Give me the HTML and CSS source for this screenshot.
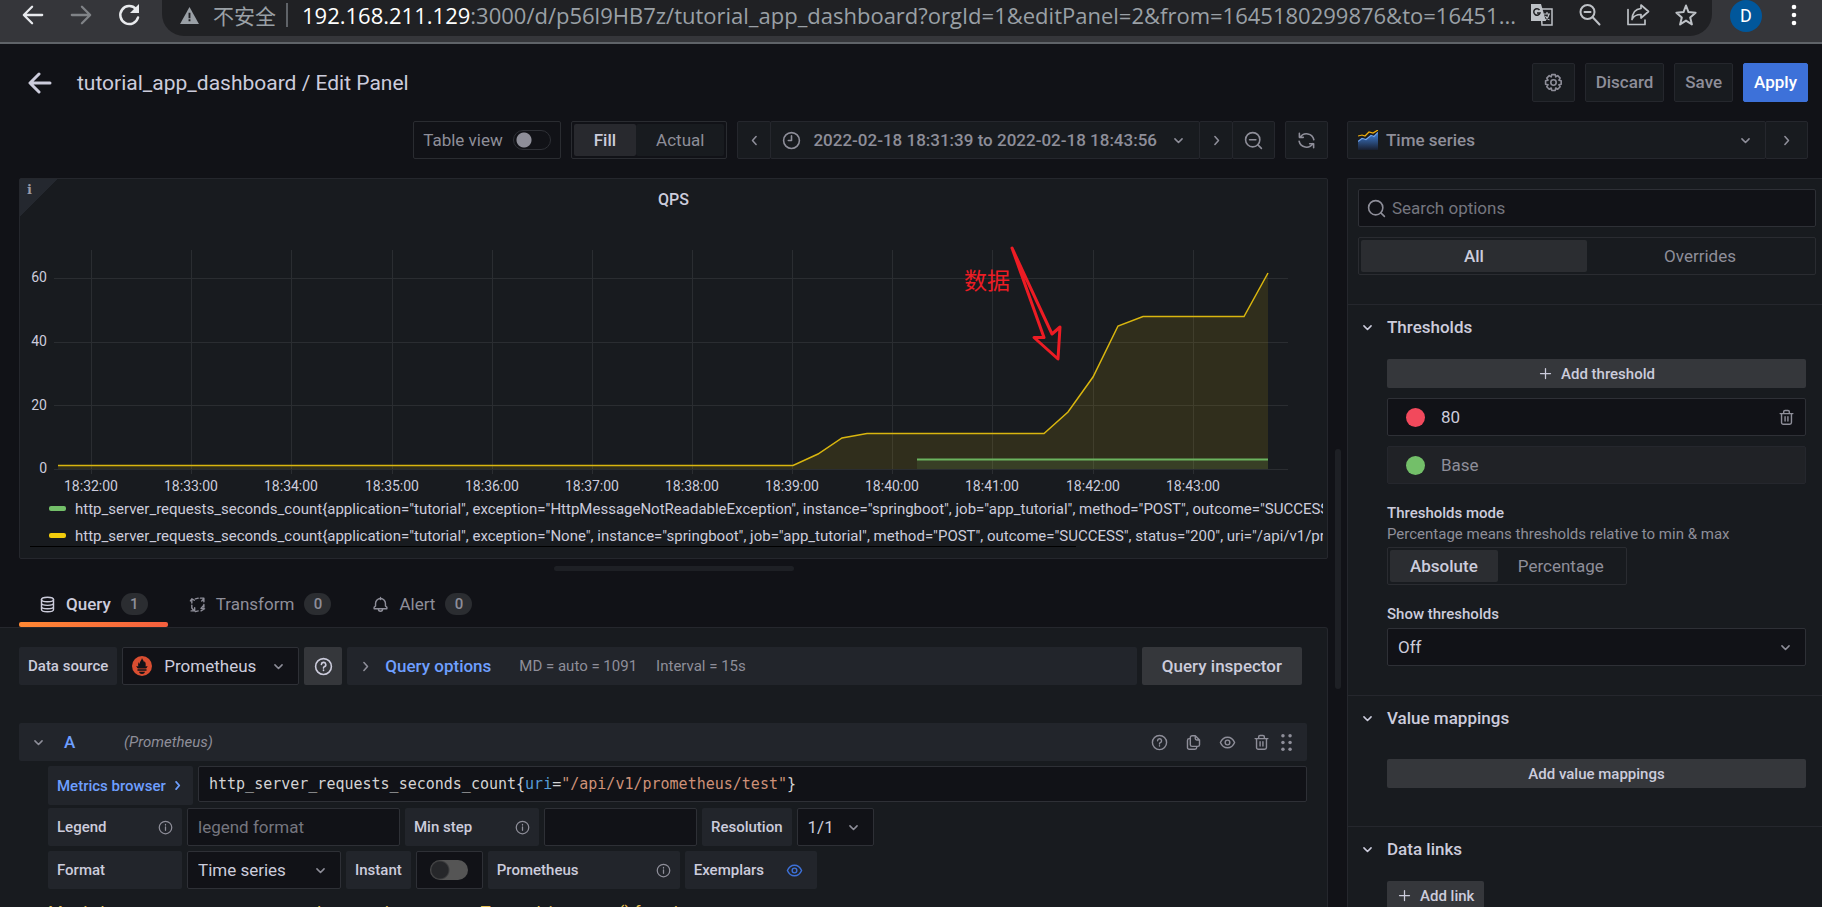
FILE: index.html
```html
<!DOCTYPE html>
<html lang="en">
<head>
<meta charset="utf-8">
<title>tutorial_app_dashboard / Edit Panel</title>
<link rel="stylesheet" href="styles.css">
</head>
<body>
<svg class="sprite" aria-hidden="true">
  <symbol id="down" viewBox="0 0 24 24"><path d="M7.500 10l4.500 4.500 4.500-4.500"/></symbol>
  <symbol id="right" viewBox="0 0 24 24"><path d="M10 7l4.500 5-4.500 5"/></symbol>
  <symbol id="left" viewBox="0 0 24 24"><path d="M14 7l-4.500 5 4.500 5"/></symbol>
  <symbol id="back" viewBox="0 0 24 24"><path d="M22 12H3M11 3l-9 9 9 9"/></symbol>
  <symbol id="plus" viewBox="0 0 24 24"><path d="M12 4v16M4 12h16"/></symbol>
  <symbol id="info" viewBox="0 0 24 24"><circle cx="12" cy="12" r="10"/><path d="M12 11v5.500M12 7v1"/></symbol>
  <symbol id="help" viewBox="0 0 24 24"><circle cx="12" cy="12" r="10"/><path d="M9.300 9.500a2.800 2.800 0 1 1 3.800 2.700c-.8.4-1.100.8-1.100 1.800M12 16.500v.6"/></symbol>
  <symbol id="search" viewBox="0 0 24 24"><circle cx="11" cy="11" r="9"/><path d="M17.500 17.500L22 22"/></symbol>
  <symbol id="zoomout" viewBox="0 0 24 24"><circle cx="11" cy="11" r="9"/><path d="M17.500 17.500L22 22M7 11h8"/></symbol>
  <symbol id="clock" viewBox="0 0 24 24"><circle cx="12" cy="12" r="10"/><path d="M12 6v6H8"/></symbol>
  <symbol id="sync" viewBox="0 0 24 24"><path d="M3 3v5h5M21 21v-5h-5M4 8a9.500 9.500 0 0 1 17.300 3M20 16A9.500 9.500 0 0 1 2.700 13"/></symbol>
  <symbol id="gear" viewBox="0 0 24 24"><circle cx="12" cy="12" r="3.400"/><path d="M9.800 2h4.400l.6 2.900 2.500-1.600 3.100 3.200-1.600 2.500 2.900.7v4.500l-2.900.6 1.600 2.500-3.100 3.200-2.500-1.600-.6 3.100H9.800l-.7-3.100-2.500 1.600-3.100-3.200 1.600-2.500L2 14.200V9.700l3.100-.7-1.600-2.500 3.100-3.200 2.500 1.600z"/></symbol>
  <symbol id="database" viewBox="0 0 24 24"><ellipse cx="12" cy="5" rx="8.500" ry="3.200"/><path d="M3.500 5v14c0 1.900 3.800 3.200 8.500 3.200s8.500-1.300 8.500-3.200V5M3.500 10c0 1.900 3.800 3.200 8.500 3.200s8.500-1.300 8.500-3.200M3.500 14.700c0 1.900 3.800 3.200 8.500 3.200s8.500-1.300 8.500-3.200"/></symbol>
  <symbol id="transform" viewBox="0 0 24 24"><path d="M4 13v4l2 2.500M4 10V6M2 7l2-3 3.500 2M9 4l4-1M16 3h5v5M21 4l-3 3M21 12v4M20 14l-3 3.500 4 .5M22 18l-5 3M9 22l4-1M3 21h5v-4.500"/></symbol>
  <symbol id="bell" viewBox="0 0 24 24"><path d="M12 2v3M3 18h18v-2l-2-2v-3.500a7 7 0 0 0-14 0V14l-2 2zM9 18.500a3 3 0 0 0 6 0"/></symbol>
  <symbol id="copy" viewBox="0 0 24 24"><path d="M20.500 8.500L14.500 2.500H10A2.500 2.500 0 0 0 7.500 5v10a2.500 2.500 0 0 0 2.500 2.500h8a2.500 2.500 0 0 0 2.500-2.500zM14.500 2.500v4a2 2 0 0 0 2 2h4M7.500 6.500H6A2.500 2.500 0 0 0 3.500 9v10A2.500 2.500 0 0 0 6 21.500h8a2.500 2.500 0 0 0 2.500-2.500v-1.500"/></symbol>
  <symbol id="eye" viewBox="0 0 24 24"><path d="M2 12c2-4.800 5.700-7.500 10-7.500s8 2.700 10 7.500c-2 4.800-5.700 7.500-10 7.500S4 16.800 2 12z"/><circle cx="12" cy="12" r="3.300"/></symbol>
  <symbol id="trash" viewBox="0 0 24 24"><path d="M3 6.500h18M8 6V4a2 2 0 0 1 2-2h4a2 2 0 0 1 2 2v2M5 6.500V19a2.500 2.500 0 0 0 2.500 2.500h9A2.500 2.500 0 0 0 19 19V6.500M10 11v6M14 11v6"/></symbol>
  <symbol id="drag" viewBox="0 0 24 24"><g fill="currentColor" stroke="none"><circle cx="7.500" cy="3.500" r="2.200"/><circle cx="16.500" cy="3.500" r="2.200"/><circle cx="7.500" cy="12" r="2.200"/><circle cx="16.500" cy="12" r="2.200"/><circle cx="7.500" cy="20.500" r="2.200"/><circle cx="16.500" cy="20.500" r="2.200"/></g></symbol>
</svg>

<div class="browser">
  <button class="nav" aria-label="Back"><svg class="i i22 bold"><use href="#back"/></svg></button>
  <button class="nav dim" aria-label="Forward"><svg class="i i22 bold flip"><use href="#back"/></svg></button>
  <button class="nav" aria-label="Reload"><svg class="i i24 bold" viewBox="0 0 24 24"><path d="M21 14.500A9 9 0 1 1 19 6"/><path d="M22 1v9h-9z" fill="currentColor" stroke="none"/></svg></button>
  <div class="omnibox">
    <svg class="warn" viewBox="0 0 20 18"><path fill="#9aa0a6" d="M10 0l10 18H0z"/><path fill="#202124" d="M9 6h2v6H9zM9 13h2v2H9z"/></svg>
    <span class="insecure">不安全</span>
    <span class="bar"></span>
    <div class="url"><b>192.168.211.129</b>:3000/d/p56l9HB7z/tutorial_app_dashboard?orgId=1&amp;editPanel=2&amp;from=1645180299876&amp;to=16451...</div>
    <div class="omni-actions">
      <button aria-label="Translate"><svg class="i24" viewBox="0 0 24 24"><path d="M11 6h11v16H12z" fill="none" stroke="#bdc1c6" stroke-width="1.500"/><path d="M1 1h10l5 17H1z" fill="#bdc1c6"/><path d="M9.500 7a3.200 3.200 0 1 0 .5 3H7" fill="none" stroke="#202124" stroke-width="1.500"/><path d="M14 11h6M17 9v2M19 11c-.5 3-2 5-4 6M15.500 13c1 2 2 3.300 4 4" fill="none" stroke="#bdc1c6" stroke-width="1.200"/></svg></button>
      <button aria-label="Zoom"><svg class="i i24" viewBox="0 0 24 24"><circle cx="9.500" cy="9" r="7"/><path d="M14.500 14l7 7.500M6.500 9h6"/></svg></button>
      <button aria-label="Share"><svg class="i i24 thin" viewBox="0 0 24 24"><path d="M2 6.500v15h17V17M15 2l7.500 6.500L15 15v-3.500c-5 0-7.500 1.500-9 5 .3-5.500 3-10.500 9-11z"/></svg></button>
      <button aria-label="Bookmark"><svg class="i i24" viewBox="0 0 24 24"><path d="M12 2.500l2.500 6.600 7.100.6-5.400 4.700 1.700 7-5.900-3.800-5.900 3.800 1.700-7-5.400-4.700 7.100-.6z"/></svg></button>
    </div>
  </div>
  <span class="avatar">D</span>
  <button class="kebab" aria-label="Menu"><svg class="i24" viewBox="0 0 24 24" fill="#fff"><circle cx="12" cy="4" r="2.300"/><circle cx="12" cy="12" r="2.300"/><circle cx="12" cy="20" r="2.300"/></svg></button>
</div>

<header class="top">
  <button class="goback" aria-label="Go back"><svg class="i i24 heavy"><use href="#back"/></svg></button>
  <h1>tutorial_app_dashboard / Edit Panel</h1>
  <div class="top-actions">
    <button class="btn square" aria-label="Settings"><svg class="i i19"><use href="#gear"/></svg></button>
    <button class="btn">Discard</button>
    <button class="btn">Save</button>
    <button class="btn primary">Apply</button>
  </div>
</header>

<main class="editor">
  <div class="left">
    <div class="toolbar">
      <label class="tableview">Table view <input type="checkbox" class="switch"></label>
      <div class="radios">
        <label><input type="radio" name="size" checked><span>Fill</span></label>
        <label><input type="radio" name="size"><span>Actual</span></label>
      </div>
      <div class="group">
        <button class="btn slim" aria-label="Earlier"><svg class="i i19"><use href="#left"/></svg></button>
        <button class="btn range"><svg class="i i19"><use href="#clock"/></svg><span>2022-02-18 18:31:39 to 2022-02-18 18:43:56</span><svg class="i i19"><use href="#down"/></svg></button>
        <button class="btn slim" aria-label="Later"><svg class="i i19"><use href="#right"/></svg></button>
        <button class="btn square" aria-label="Zoom out"><svg class="i i19"><use href="#zoomout"/></svg></button>
      </div>
      <button class="btn square" aria-label="Refresh"><svg class="i i19"><use href="#sync"/></svg></button>
    </div>

    <section class="panel">
      <span class="corner">i</span>
      <h2>QPS</h2>
      <svg class="chart" viewBox="20 218 1307 276">
        <g class="grid">
          <path d="M54 277.500H1288M54 341.500H1288M54 404.500H1288M54 468.500H1288"/>
          <path d="M91.500 249V473M191.500 249V473M291.500 249V473M392.500 249V473M492.500 249V473M592.500 249V473M692.500 249V473M792.500 249V473M892.500 249V473M992.500 249V473M1093.500 249V473M1193.500 249V473"/>
        </g>
        <path fill="#f2cc0c" fill-opacity=".11" d="M58 465H793L818 453L842 437L867 433H1044L1068 411L1093 376L1118 325L1143 315.500H1244L1268 272V468H58z"/>
        <path fill="#73bf69" fill-opacity=".12" d="M917 459H1268V468H917z"/>
        <path class="line yellow" d="M58 464.500H793L818 453L842 437L867 432.500H1044L1068 411L1093 376L1118 325L1143 315.500H1244L1268 272"/>
        <path class="line green" d="M917 458.500H1268"/>
        <g class="ylab"><text x="47" y="281">60</text><text x="47" y="345">40</text><text x="47" y="409">20</text><text x="47" y="472">0</text></g>
        <g class="xlab"><text x="91" y="490">18:32:00</text><text x="191" y="490">18:33:00</text><text x="291" y="490">18:34:00</text><text x="392" y="490">18:35:00</text><text x="492" y="490">18:36:00</text><text x="592" y="490">18:37:00</text><text x="692" y="490">18:38:00</text><text x="792" y="490">18:39:00</text><text x="892" y="490">18:40:00</text><text x="992" y="490">18:41:00</text><text x="1093" y="490">18:42:00</text><text x="1193" y="490">18:43:00</text></g>
        <text class="note" x="964" y="288">数据</text>
        <path class="arrow" d="M1012 247L1044 336.500H1034L1058 358L1060 326L1052 333z"/>
      </svg>
      <ul class="legend">
        <li><i class="sw green"></i><span>http_server_requests_seconds_count{application="tutorial", exception="HttpMessageNotReadableException", instance="springboot", job="app_tutorial", method="POST", outcome="SUCCESS",</span></li>
        <li><i class="sw yellow"></i><span>http_server_requests_seconds_count{application="tutorial", exception="None", instance="springboot", job="app_tutorial", method="POST", outcome="SUCCESS", status="200", uri="/api/v1/pro</span></li>
      </ul>
      <div class="hscroll"></div>
    </section>
    <div class="handle"></div>

    <nav class="tabs">
      <a href="#query" class="active"><svg class="i i17"><use href="#database"/></svg>Query<em>1</em></a>
      <a href="#transform-tab"><svg class="i i17"><use href="#transform"/></svg>Transform<em>0</em></a>
      <a href="#alert"><svg class="i i17"><use href="#bell"/></svg>Alert<em>0</em></a>
    </nav>

    <section class="queries">
      <div class="row source">
        <label class="lab" for="ds">Data source</label>
        <div class="select ds">
          <svg class="prom" viewBox="0 0 20 20"><circle cx="10" cy="10" r="10" fill="#da4e31"/><path fill="#111217" d="M10 2c.5 2 2 2.800 2 4.500.5-.5.6-1 .6-1.500 1.400 2 1.200 3.800 1 5.500l2-.5c-.3 1.200-.9 2-1.500 2.500H6C5 11.800 4.600 11 4.300 10l2 .5C6 8.500 6 7.500 7 6c.1 1 .3 1.500.8 2C7.500 5.500 9.500 4.500 10 2zM5.500 13.300h9v1.500h-9zM7 15.700h6c-.4 1.500-1.400 2.200-3 2.200s-2.600-.7-3-2.200z"/></svg>
          <select id="ds"><option>Prometheus</option></select><svg class="i i19"><use href="#down"/></svg>
        </div>
        <button class="btn solid help" aria-label="Help"><svg class="i i19"><use href="#help"/></svg></button>
        <div class="options"><svg class="i i19"><use href="#right"/></svg><a href="#options">Query options</a><span>MD = auto = 1091</span><span>Interval = 15s</span></div>
        <button class="btn solid inspector">Query inspector</button>
      </div>

      <div class="qhead">
        <svg class="i i19"><use href="#down"/></svg><strong>A</strong><i>(Prometheus)</i>
        <div class="qicons">
          <button aria-label="Show help"><svg class="i i17"><use href="#help"/></svg></button>
          <button aria-label="Duplicate"><svg class="i i17"><use href="#copy"/></svg></button>
          <button aria-label="Toggle"><svg class="i i17"><use href="#eye"/></svg></button>
          <button aria-label="Remove"><svg class="i i17"><use href="#trash"/></svg></button>
          <button class="grip" aria-label="Drag"><svg class="i i19"><use href="#drag"/></svg></button>
        </div>
      </div>

      <div class="row indent expr">
        <button class="lab metrics">Metrics browser <svg class="i i17 bold"><use href="#right"/></svg></button>
        <code class="code">http_server_requests_seconds_count{<span class="k">uri</span>=<span class="s">"/api/v1/prometheus/test"</span>}</code>
      </div>
      <div class="row indent">
        <label class="lab w134" for="lf">Legend <svg class="i i15"><use href="#info"/></svg></label>
        <input class="field w213" id="lf" type="text" placeholder="legend format">
        <label class="lab w134" for="ms">Min step <svg class="i i15"><use href="#info"/></svg></label>
        <input class="field w153" id="ms" type="text">
        <label class="lab" for="rs">Resolution</label>
        <div class="select w77"><select id="rs"><option>1/1</option></select><svg class="i i19"><use href="#down"/></svg></div>
      </div>
      <div class="row indent">
        <label class="lab w134" for="ft">Format</label>
        <div class="select w154"><select id="ft"><option>Time series</option></select><svg class="i i19"><use href="#down"/></svg></div>
        <label class="lab" for="inst">Instant</label>
        <div class="switchbox"><input id="inst" type="checkbox" class="switch gray"></div>
        <span class="lab w192">Prometheus <svg class="i i15"><use href="#info"/></svg></span>
        <div class="lab exemplars">Exemplars <button aria-label="Toggle exemplars"><svg class="i i17 blue"><use href="#eye"/></svg></button></div>
      </div>
      <p class="hint">Metric http_server_requests_seconds_count is a counter. Try applying a rate() function.</p>
    </section>
  </div>

  <div class="vscroll"></div>

  <aside class="right">
    <div class="viz">
      <button class="btn vizname">
        <svg class="i20" viewBox="0 0 20 20"><defs><linearGradient id="b" x2="0" y2="1"><stop stop-color="#3f7fd6"/><stop offset="1" stop-color="#181f30"/></linearGradient></defs><path fill="url(#b)" d="M0 12l4-3 4 1 5-4 3 1 4-4v17H0z"/><path fill="none" stroke="#6ea6f5" stroke-width="1.200" d="M0 11.500l4-3 4 1 5-4 3 1 4-4"/><path fill="none" stroke="#f2b00c" stroke-width="1.200" d="M0 6l4-1 3 1 4-4 4 1 5-3"/></svg>
        <span>Time series</span><svg class="i i19"><use href="#down"/></svg></button>
      <button class="btn square" aria-label="Close options"><svg class="i i19"><use href="#right"/></svg></button>
    </div>
    <div class="pane">
      <div class="filters">
        <label class="search"><svg class="i i19"><use href="#search"/></svg><input type="text" placeholder="Search options" aria-label="Search options"></label>
        <div class="radios wide">
          <label><input type="radio" name="tab" checked><span>All</span></label>
          <label><input type="radio" name="tab"><span>Overrides</span></label>
        </div>
      </div>
      <section class="opt first">
        <h3><svg class="i i19"><use href="#down"/></svg>Thresholds</h3>
        <div class="body">
          <button class="btn solid small"><svg class="i i15"><use href="#plus"/></svg>Add threshold</button>
          <div class="thr"><span class="dot red"></span><input type="text" value="80" aria-label="Threshold"><button aria-label="Remove threshold"><svg class="i i17"><use href="#trash"/></svg></button></div>
          <div class="thr base"><span class="dot green"></span><input type="text" value="Base" aria-label="Base threshold" disabled></div>
          <div class="fieldset mode">
            <h4>Thresholds mode</h4>
            <p>Percentage means thresholds relative to min &amp; max</p>
            <div class="radios fit">
              <label><input type="radio" name="mode" checked><span>Absolute</span></label>
              <label><input type="radio" name="mode"><span>Percentage</span></label>
            </div>
          </div>
          <div class="fieldset">
            <h4><label for="st">Show thresholds</label></h4>
            <div class="select"><select id="st"><option>Off</option></select><svg class="i i19"><use href="#down"/></svg></div>
          </div>
        </div>
      </section>
      <section class="opt">
        <h3><svg class="i i19"><use href="#down"/></svg>Value mappings</h3>
        <div class="body"><button class="btn solid small">Add value mappings</button></div>
      </section>
      <section class="opt">
        <h3><svg class="i i19"><use href="#down"/></svg>Data links</h3>
        <div class="body tight"><button class="btn solid small auto"><svg class="i i15"><use href="#plus"/></svg>Add link</button></div>
      </section>
    </div>
  </aside>
</main>
</body>
</html>
```
FILE: styles.css
```css
* { box-sizing: border-box; }
html, body { height: 100%; }
body {
  margin: 0;
  display: flex;
  flex-direction: column;
  overflow: hidden;
  background: #111217;
  color: #ccccdc;
  font: 17px/20px Roboto, "Noto Sans CJK SC", sans-serif;
}
button, input, select { font: inherit; color: inherit; }
button { padding: 0; border: 0; background: none; display: inline-flex; align-items: center; justify-content: center; }
a { color: inherit; text-decoration: none; }
h1, h2, h3, h4, p, ul { margin: 0; padding: 0; font-weight: 400; }
svg { flex: none; display: block; }
.sprite { display: none; }

.i { fill: none; stroke: currentColor; stroke-width: 2; stroke-linecap: round; stroke-linejoin: round; }
.i15 { width: 15px; height: 15px; }
.i17 { width: 17px; height: 17px; }
.i19 { width: 19px; height: 19px; }
.i20 { width: 20px; height: 20px; }
.i22 { width: 22px; height: 22px; }
.i24 { width: 24px; height: 24px; }
.thin { stroke-width: 1.700; }
.bold { stroke-width: 2.500; }
.heavy { stroke-width: 3; }
.flip { transform: scaleX(-1); }
.blue { color: #3d71d9; }

/* browser chrome */
.browser {
  flex: none;
  height: 44px;
  display: flex;
  align-items: flex-start;
  gap: 24px;
  padding: 0 16px 0 21px;
  background: #35363a;
  border-bottom: 2px solid #5f6368;
}
.browser button { height: 30px; color: #e8eaed; }
.nav { width: 24px; }
.browser .dim { color: #808387; }
.omnibox {
  flex: 1;
  min-width: 0;
  height: 36px;
  padding: 0 14px 6px 18px;
  margin-right: -6px;
  margin-left: -3px;
  border-radius: 0 0 22px 22px;
  background: #202124;
  display: flex;
  align-items: center;
}
.warn { width: 19px; height: 17px; }
.insecure { margin-left: 14px; font: 21px/26px "Noto Sans CJK SC", sans-serif; color: #9aa0a6; }
.bar { width: 2px; height: 24px; margin: 0 14px 0 10px; background: #5f6368; }
.url { flex: 1; min-width: 0; overflow: hidden; white-space: nowrap; font: 22px/28px "Open Sans", sans-serif; color: #9aa0a6; }
.url b { font-weight: 400; color: #fff; }
.omni-actions { display: flex; gap: 24px; }
.browser .omni-actions button { color: #bdc1c6; }
.avatar { width: 32px; height: 32px; border-radius: 50%; background: #01579b; color: #fff; text-align: center; font-size: 18px; line-height: 31px; }
.browser .kebab { margin-left: -4px; }

/* page header */
.top { flex: none; display: flex; align-items: center; height: 77px; padding: 0 14px 0 28px; }
.goback { width: 24px; height: 24px; }
.top h1 { margin-left: 25px; font-size: 21px; line-height: 26px; }
.top-actions { margin-left: auto; display: flex; gap: 10px; }
.btn {
  height: 38px;
  padding: 0 10px;
  gap: 8px;
  border: 1px solid #25272d;
  border-radius: 2px;
  background: #181b1f;
  color: #8e8e99;
  font-weight: 500;
  white-space: nowrap;
}
.top .btn { height: 39px; padding-bottom: 1px; }
.square { width: 43px; padding: 0; }
.slim { width: 34px; padding: 0; }
.primary { background: #3d71d9; border-color: #3d71d9; color: #fff; }
.solid { background: #35373b; border: 0; color: #ccccdc; }

/* main split */
.editor { flex: 1; min-height: 0; display: grid; grid-template-columns: minmax(0, 1fr) 19px 475px; }
.left { min-width: 0; display: flex; flex-direction: column; }
.toolbar { display: flex; justify-content: flex-end; gap: 10px; margin-bottom: 19px; }
.tableview { display: flex; align-items: center; gap: 10px; height: 38px; padding: 0 9px; border: 1px solid #2a2c31; border-radius: 2px; color: #8e8e99; }
.switch {
  appearance: none;
  width: 38px;
  height: 20px;
  margin: 0;
  border: 1px solid #2e3036;
  border-radius: 10px;
  background: radial-gradient(circle at 10px 9px, #8e8e99 7px, transparent 8px);
}
.gray { border: 0; background: radial-gradient(circle at 10px 10px, #26272a 8px, #555 10px); }
.radios { display: flex; height: 38px; padding: 2px; border: 1px solid #2a2c31; border-radius: 2px; }
.radios label { display: flex; }
.radios input { appearance: none; width: 0; height: 0; margin: 0; }
.radios span { display: flex; align-items: center; justify-content: center; flex: 1; padding: 0 20px; border-radius: 2px; color: #8e8e99; }
.radios input:checked + span { background: #2b2d31; color: #ccccdc; font-weight: 500; }
.toolbar .radios span { background: #181b1f; }
.toolbar .radios input:checked + span { background: #28292e; }
.group { display: flex; }
.group .btn + .btn { margin-left: -1px; }
.range { padding: 0 11px; gap: 12px; }

.panel { position: relative; flex: none; margin-left: 19px; border: 1px solid #25272d; border-radius: 2px; background: #181b1f; padding-bottom: 11px; }
.panel h2 { padding-top: 11px; height: 40px; text-align: center; font-size: 16px; font-weight: 500; }
.corner { position: absolute; left: 0; top: 0; width: 38px; height: 38px; padding-left: 7px; background: linear-gradient(135deg, #24282f 50%, transparent 50%); font: bold 13px/22px "DejaVu Serif", serif; color: #9a9aa8; }
.chart { width: 100%; height: auto; }
.chart text { font-family: Roboto, "Noto Sans CJK SC", sans-serif; font-size: 14px; fill: #ccccdc; }
.grid path { stroke: #2a2d31; fill: none; }
.ylab text { text-anchor: end; }
.xlab text { text-anchor: middle; }
.line { fill: none; stroke-width: 1.500; }
.line.yellow { stroke: #d9b60f; }
.line.green { stroke: #6bb35f; stroke-width: 2; }
.chart .note { fill: #ed1c24; font-size: 23px; }
.arrow { fill: none; stroke: #ed1c24; stroke-width: 3; stroke-linejoin: round; }
.legend { list-style: none; margin: 0 4px 0 29px; }
.legend li { display: flex; align-items: center; gap: 9px; height: 27px; overflow: hidden; white-space: nowrap; font-size: 15px; }
.sw { flex: none; width: 17px; height: 5px; border-radius: 2px; }
.sw.green, .dot.green { background: #73bf69; }
.sw.yellow { background: #f2cc0c; }
.hscroll { width: 80%; height: 1px; margin: -3px 0 0 10px; background: #000; }
.handle { flex: none; align-self: center; width: 240px; height: 5px; margin: 7px 0 19px 19px; border-radius: 3px; background: #1e2025; }

.tabs { flex: none; display: flex; height: 37px; padding-left: 19px; gap: 1px; }
.tabs a { position: relative; display: flex; align-items: center; padding: 0 20px 9px; gap: 10px; color: #8e8e99; }
.tabs .active { color: #ccccdc; font-weight: 500; }
.tabs .active::after { content: ""; position: absolute; left: 0; right: 0; bottom: 0; height: 5px; border-radius: 2px; background: linear-gradient(90deg, #ff8833, #f55f3e); }
.tabs em { min-width: 27px; height: 22px; border-radius: 11px; background: #2b2d31; color: #8e8e99; text-align: center; font: 500 15px/22px Roboto, sans-serif; }

.queries { flex: none; padding: 19px 20px 0 19px; border: 1px solid #25272d; border-left: 0; border-top-right-radius: 3px; background: #181b1f; }
.row { display: flex; gap: 5px; margin-bottom: 5px; }
.indent { margin-left: 29px; }
.expr { margin-bottom: 3px; }
.source { margin: 0 5px 38px 0; }
.lab { display: flex; align-items: center; justify-content: space-between; height: 38px; padding: 0 9px; border-radius: 2px; background: #22252b; font-size: 15px; font-weight: 500; white-space: nowrap; }
.lab .i15 { color: #8e8e99; }
.w134 { width: 134px; }
.w213 { width: 213px; }
.w153 { width: 153px; }
.w154 { width: 154px; }
.w192 { width: 192px; }
.w77 { width: 77px; }
.select { display: grid; align-items: center; height: 38px; border: 1px solid #2e3036; border-radius: 2px; background: #111217; }
.select > * { grid-area: 1 / 1; }
.select select { appearance: none; width: 100%; height: 36px; padding: 0 10px; border: 0; background: none; }
.select .i { justify-self: end; margin-right: 10px; color: #8e8e99; pointer-events: none; }
.ds { width: 177px; }
.ds select { padding-left: 41px; }
.prom { width: 20px; height: 20px; margin-left: 9px; }
.help { width: 38px; padding: 0; }
.options { flex: 1; display: flex; align-items: center; padding-left: 9px; background: #22252b; border-radius: 2px; color: #8e8e99; font-size: 15px; }
.options a { margin: 0 9px 0 10px; color: #6e9fff; font-size: 17px; font-weight: 500; }
.options span { margin-left: 19px; }
.inspector { padding: 0 20px; }
.qhead { display: flex; align-items: center; height: 38px; margin-bottom: 5px; padding: 0 11px 0 10px; border-radius: 2px; background: #22252b; color: #8e8e99; font-size: 15px; }
.qhead strong { width: 60px; margin-left: 16px; color: #6e9fff; font-size: 17px; font-weight: 500; }
.qicons { margin-left: auto; display: flex; gap: 17px; }
.grip { margin-left: -10px; }
.metrics { width: 145px; height: 39px; justify-content: flex-start; gap: 3px; color: #6e9fff; }
.code { flex: 1; height: 36px; padding: 0 10px; border: 1px solid #2e3036; border-radius: 2px; background: #111217; font: 15px/34px "DejaVu Sans Mono", monospace; color: #d4d4d4; }
.code .k { color: #569cd6; }
.code .s { color: #ce9178; }
.field { height: 38px; padding: 0 10px; border: 1px solid #2e3036; border-radius: 2px; background: #111217; }
::placeholder { color: #75767f; opacity: 1; }
.switchbox { width: 67px; height: 38px; display: flex; align-items: center; justify-content: center; border: 1px solid #2e3036; border-radius: 2px; background: #111217; }
.exemplars { width: 132px; padding-right: 14px; }
.hint { margin: 12px 0 0 29px; color: #e8c052; font-size: 17px; line-height: 22px; white-space: nowrap; }

.vscroll { justify-self: center; align-self: start; width: 6px; height: 240px; margin-top: 328px; border-radius: 3px; background: #1e2025; }

/* options pane */
.right { display: flex; flex-direction: column; min-width: 0; }
.viz { display: flex; margin-bottom: 19px; padding-right: 14px; }
.vizname { flex: 1; }
.vizname span { flex: 1; text-align: left; }
.viz .square { margin-left: -1px; }
.pane { flex: 1; border: 1px solid #25272d; border-right: 0; border-bottom: 0; border-radius: 2px 0 0 0; background: #181b1f; }
.filters { display: flex; flex-direction: column; gap: 10px; padding: 10px 6px 29px 10px; }
.search { display: flex; align-items: center; height: 38px; gap: 6px; padding: 0 8px; border: 1px solid #2e3036; border-radius: 2px; background: #111217; color: #8e8e99; }
.search input { flex: 1; border: 0; padding: 0; background: none; }
.wide label { flex: 1; }
.fit { align-self: flex-start; }
.opt { border-top: 1px solid #25272d; }
.opt h3 { display: flex; align-items: center; gap: 10px; height: 44px; padding-left: 10px; font-size: 17px; font-weight: 500; }
.body { display: flex; flex-direction: column; gap: 10px; padding: 19px 16px 38px 39px; }
.first .body { padding-top: 10px; padding-bottom: 29px; }
.body .small { height: 29px; font-size: 15px; }
.opt .tight { padding-top: 10px; }
.auto { align-self: flex-start; }
.thr { display: flex; align-items: center; height: 38px; padding: 0 10px 0 18px; border: 1px solid #2e3036; border-radius: 2px; background: #111217; }
.thr input { flex: 1; min-width: 0; margin-left: 16px; padding: 0; border: 0; background: none; }
.thr button { color: #8e8e99; }
.base { background: #202226; border-color: #25272d; color: #8e8e99; }
.dot { width: 19px; height: 19px; border-radius: 50%; }
.dot.red { background: #f2495c; }
.fieldset { display: flex; flex-direction: column; margin-top: 9px; }
.fieldset h4 { margin-bottom: 4px; font-size: 15px; font-weight: 500; }
.fieldset.mode h4 { margin-bottom: 1px; }
.fieldset p { margin-bottom: 3px; font-size: 15px; color: #8e8e99; }
```
